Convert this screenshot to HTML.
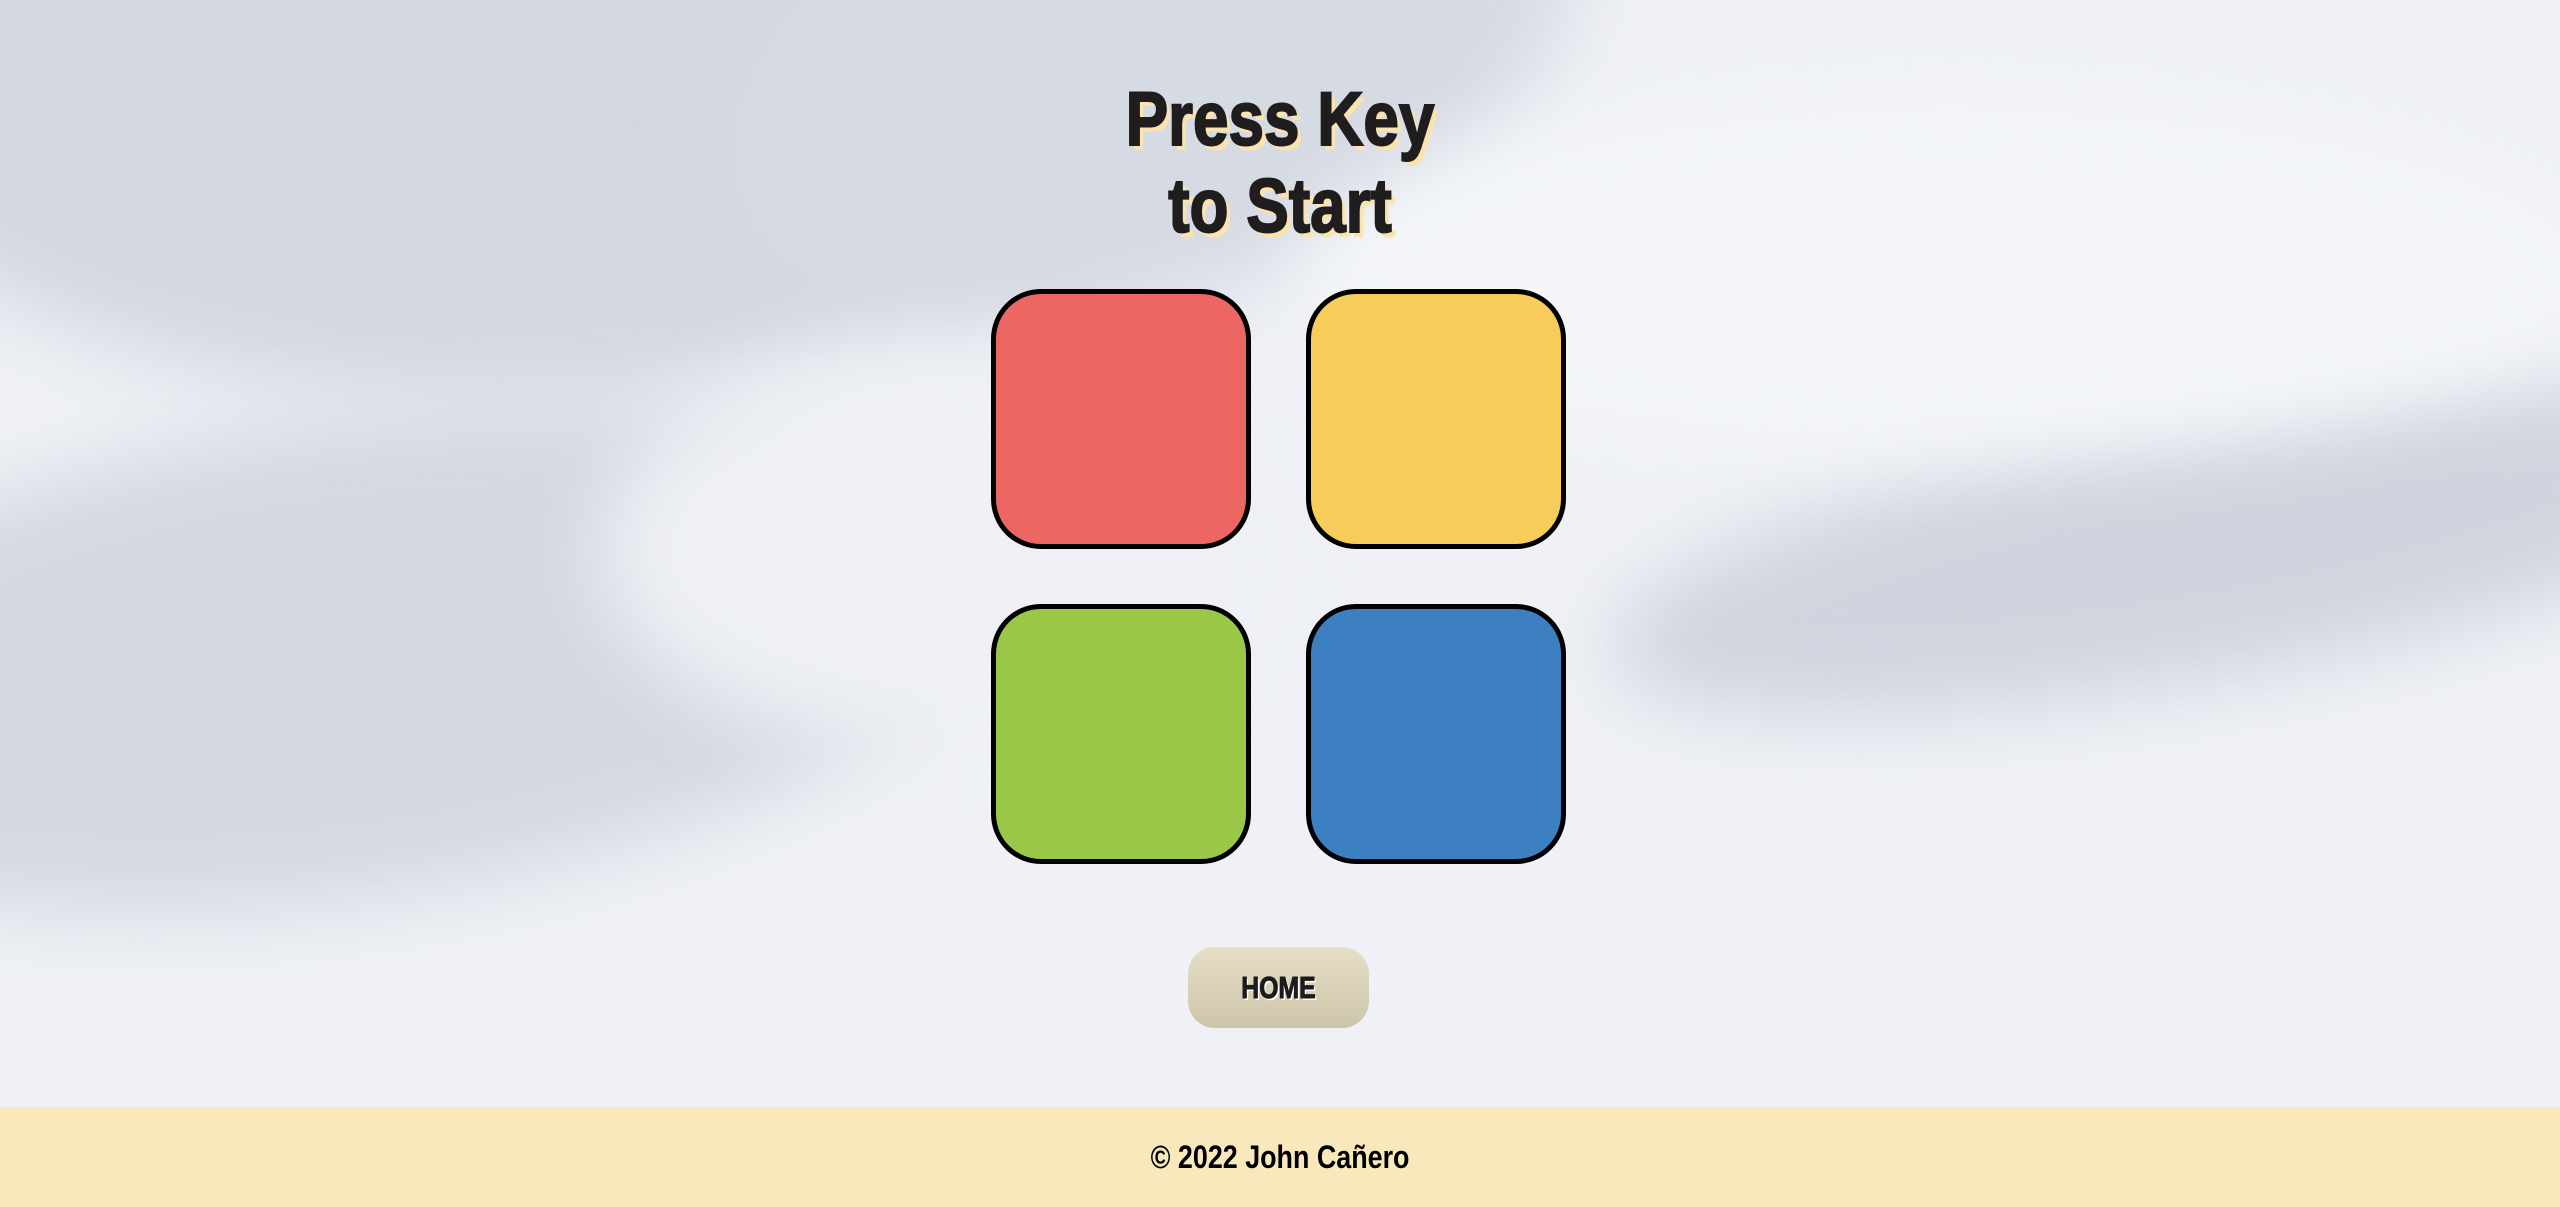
<!DOCTYPE html>
<html><head><meta charset="utf-8"><style>
html,body{margin:0;padding:0;width:2560px;height:1207px;overflow:hidden;}
body{position:relative;background:#eff1f6;font-family:"Liberation Sans Narrow","Liberation Sans",sans-serif;}
.bg{position:absolute;inset:0;overflow:hidden;}
.b{position:absolute;border-radius:50%;filter:blur(40px);}
h1{position:absolute;left:0;width:2560px;top:76px;margin:0;text-align:center;font-size:76px;line-height:87px;font-weight:700;color:#1f1d1e;-webkit-text-stroke:2px #1f1d1e;text-shadow:5px 5px 0 #fbe3ad;transform:scaleX(0.84);transform-origin:1280px 0;letter-spacing:0;}
.sq{position:absolute;width:250px;height:250px;border:5px solid #000;border-radius:50px;}
.btn{position:absolute;left:1188px;top:947px;width:181px;height:81px;border-radius:27px;background:linear-gradient(#e6dfc6,#cdc5a9);text-align:center;line-height:81px;font-weight:700;font-size:31px;color:#1d1b1c;-webkit-text-stroke:1px #1d1b1c;text-shadow:2px 2px 0 #fff;}
.btn span{display:inline-block;transform:scaleX(0.8);}
footer{position:absolute;left:0;top:1107px;width:2560px;height:100px;background:#fae8bd;text-align:center;line-height:100px;font-size:32px;font-weight:700;color:#000;}
footer span{display:inline-block;transform:scaleX(0.84);}
</style></head><body>
<div class="bg">
<div class="b" style="left:-200px;top:-300px;width:1400px;height:700px;background:#d2d7e0;"></div>
<div class="b" style="left:700px;top:-200px;width:900px;height:500px;background:#d6dae3;transform:rotate(-20deg);"></div>
<div class="b" style="left:-300px;top:420px;width:1300px;height:480px;background:#d4d8e1;transform:rotate(-8deg);"></div>
<div class="b" style="left:1600px;top:420px;width:1200px;height:260px;background:#d0d4de;transform:rotate(-10deg);"></div>
<div class="b" style="left:600px;top:350px;width:700px;height:400px;background:#eef0f5;"></div>
<div class="b" style="left:1300px;top:100px;width:1300px;height:350px;background:#f3f5f9;"></div>
</div>
<h1>Press Key<br>to Start</h1>
<div class="sq" style="left:991px;top:289px;background:#ec6663;"></div>
<div class="sq" style="left:1306px;top:289px;background:#f7cc5b;"></div>
<div class="sq" style="left:991px;top:604px;background:#9ac748;"></div>
<div class="sq" style="left:1306px;top:604px;background:#3d80c1;"></div>
<div class="btn"><span>HOME</span></div>
<footer><span>© 2022 John Cañero</span></footer>
</body></html>
